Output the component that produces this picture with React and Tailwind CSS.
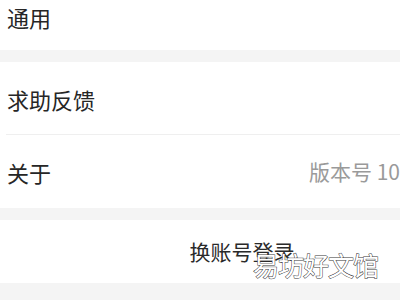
import React from "react";

const font = { fontFamily: '"Noto Sans CJK SC", "Noto Sans", sans-serif' };

function Row({ label, right, divider }) {
  return (
    <div className="relative h-[73px] flex items-center pl-[7px]">
      <span className="text-[22px] leading-none text-[#262626] whitespace-nowrap">{label}</span>
      {right && (
        <span className="ml-auto whitespace-nowrap text-[21px] leading-none text-[#9a9a9a]">
          {right}
        </span>
      )}
      {divider && <div className="absolute bottom-0 left-[6px] right-0 h-px bg-[#efefef]" />}
    </div>
  );
}

export default function App() {
  return (
    <div className="relative w-[400px] h-[300px] overflow-hidden bg-[#f4f4f4]" style={font}>
      {/* 通用 */}
      <div className="h-[50px] bg-white flex items-start pl-[7px] pt-[4px]">
        <span className="text-[22px] leading-[26px] text-[#262626]">通用</span>
      </div>

      <div className="h-[12px]" />

      <div className="bg-white">
        <Row label="求助反馈" divider />
        <Row label="关于" right="版本号 10" />
      </div>

      <div className="h-[12px]" />

      <div className="h-[63px] bg-white flex items-center justify-center pl-[84px]">
        <span className="text-[21px] leading-none text-[#2a2a2a]">换账号登录</span>
      </div>

      {/* watermark */}
      <div className="absolute left-[253px] top-[248px] text-[26px] leading-[34px] text-white tracking-[-1px] [-webkit-text-stroke:1px_#3a3a3a] [paint-order:stroke_fill]">
        易坊好文馆
      </div>
    </div>
  );
}
